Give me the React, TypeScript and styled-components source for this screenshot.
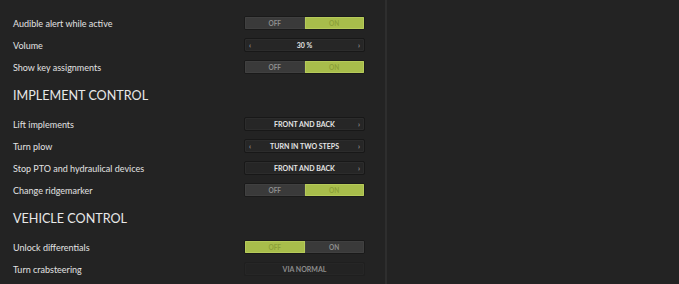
import React from "react";
import styled, {createGlobalStyle} from "styled-components";

const GlobalStyle = createGlobalStyle`
  html, body {
    margin: 0;
    padding: 0;
    background: #232323;
    font-family: Lato, "Open Sans", sans-serif;
  }
`;

const Root = styled.div`
  display: flex;
  width: 679px;
  height: 284px;
  overflow: hidden;
  background: #232323;
`;

const Panel = styled.div`
  width: 385px;
  padding: 12px 0 0 13px;
  box-sizing: border-box;
`;

const Divider = styled.div`
  width: 2px;
  background: #2e2e2e;
`;

const SectionTitle = styled.h2`
  height: 35px;
  margin: 0;
  display: flex;
  align-items: center;
  font-size: 12.6px;
  font-weight: 400;
  color: #e8e8e8;
  text-transform: uppercase;
`;

const Row = styled.div`
  display: grid;
  grid-template-columns: 231px 121px;
  align-items: center;
  height: 22px;
`;

const Label = styled.span`
  font-size: 9px;
  color: #e2e2e2;
`;

const Toggle = styled.div`
  display: flex;
  height: 14px;
  border: 1px solid #1a1a1a;
  border-radius: 2px;
  box-sizing: border-box;
  overflow: hidden;
`;

const ToggleSide = styled.div<{ $active: boolean }>`
  flex: 1;
  display: flex;
  align-items: center;
  justify-content: center;
  font-size: 6.5px;
  font-weight: 700;
  background: ${p => p.$active ? "#a8bd4b" : "#3a3a3a"};
  color: ${p => p.$active ? "#8ca139" : "#8e8e8e"};
  box-shadow: inset 0 0 0 1px ${p => p.$active ? "#b6ca5a" : "#404040"};
`;

const Selector = styled.div<{ $disabled?: boolean }>`
  position: relative;
  display: flex;
  align-items: center;
  justify-content: center;
  height: 14px;
  border: 1px solid ${p => p.$disabled ? "#1f1f1f" : "#181818"};
  border-radius: 2px;
  box-sizing: border-box;
  background: ${p => p.$disabled ? "#232323" : "#262626"};
  box-shadow: inset 0 0 0 1px ${p => p.$disabled ? "#262626" : "#2c2c2c"};
  font-size: 7px;
  font-weight: 700;
  color: ${p => p.$disabled ? "#8c8c8c" : "#e4e4e4"};
  text-transform: uppercase;
`;

const Arrow = styled.span<{ $side: "left" | "right" }>`
  position: absolute;
  top: 50%;
  ${p => p.$side}: 4px;
  transform: translateY(-55%);
  font-size: 7px;
  color: #9a9a9a;
`;

const Switch: React.FC<{ on: boolean }> = ({on}) => (
    <Toggle>
        <ToggleSide $active={!on}>OFF</ToggleSide>
        <ToggleSide $active={on}>ON</ToggleSide>
    </Toggle>
);

const Choice: React.FC<{ value: string; prev?: boolean; next?: boolean; disabled?: boolean }> =
    ({value, prev, next, disabled}) => (
        <Selector $disabled={disabled}>
            {prev && <Arrow $side="left">‹</Arrow>}
            {value}
            {next && <Arrow $side="right">›</Arrow>}
        </Selector>
    );

const App: React.FC = () => {
    return (
        <Root>
            <GlobalStyle/>
            <Panel>
                <Row><Label>Audible alert while active</Label><Switch on/></Row>
                <Row><Label>Volume</Label><Choice value="30 %" prev next/></Row>
                <Row><Label>Show key assignments</Label><Switch on/></Row>

                <SectionTitle>Implement control</SectionTitle>
                <Row><Label>Lift implements</Label><Choice value="Front and back" next/></Row>
                <Row><Label>Turn plow</Label><Choice value="Turn in two steps" prev next/></Row>
                <Row><Label>Stop PTO and hydraulical devices</Label><Choice value="Front and back" next/></Row>
                <Row><Label>Change ridgemarker</Label><Switch on/></Row>

                <SectionTitle>Vehicle control</SectionTitle>
                <Row><Label>Unlock differentials</Label><Switch on={false}/></Row>
                <Row><Label>Turn crabsteering</Label><Choice value="Via normal" disabled/></Row>
            </Panel>
            <Divider/>
        </Root>
    );
};

export default App;
